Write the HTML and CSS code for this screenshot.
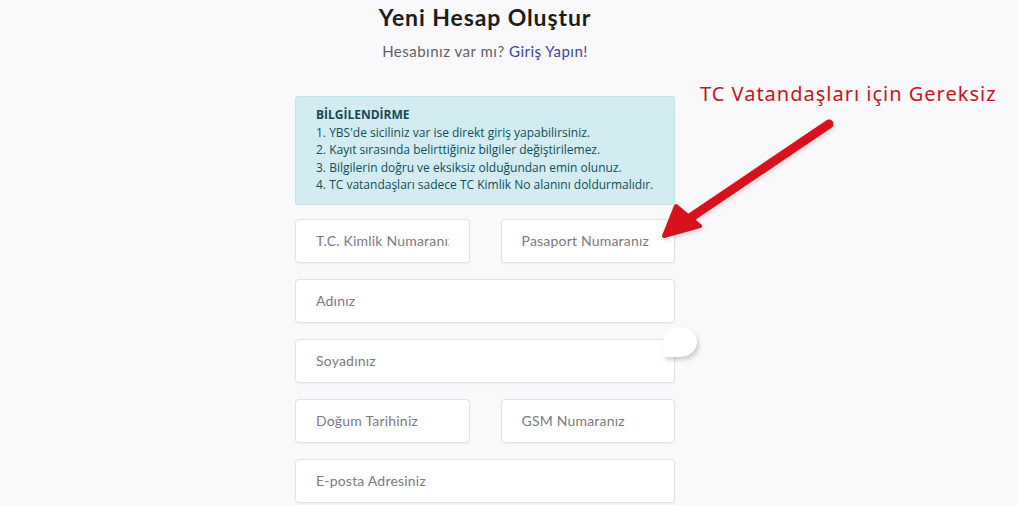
FILE: index.html
```html
<!DOCTYPE html>
<html>

<head>
    <title>Yeni Hesap Oluştur</title>
    <meta charset="UTF-8" />
    <link rel="stylesheet" href="styles.css">
</head>

<body>
    <div class="page">
        <div class="register">
            <h1>Yeni Hesap Oluştur</h1>
            <p class="login-hint">Hesabınız var mı? <a href="#">Giriş Yapın!</a></p>

            <div class="info">
                <strong>BİLGİLENDİRME</strong>
                <div>1. YBS'de siciliniz var ise direkt giriş yapabilirsiniz.</div>
                <div>2. Kayıt sırasında belirttiğiniz bilgiler değiştirilemez.</div>
                <div>3. Bilgilerin doğru ve eksiksiz olduğundan emin olunuz.</div>
                <div>4. TC vatandaşları sadece TC Kimlik No alanını doldurmalıdır.</div>
            </div>

            <form class="fields">
                <div class="row two">
                    <input type="text" placeholder="T.C. Kimlik Numaranız" />
                    <input type="text" placeholder="Pasaport Numaranız" />
                </div>
                <div class="row">
                    <input type="text" placeholder="Adınız" />
                </div>
                <div class="row">
                    <input type="text" placeholder="Soyadınız" />
                    <span class="bubble"></span>
                </div>
                <div class="row two">
                    <input type="text" placeholder="Doğum Tarihiniz" />
                    <input type="text" placeholder="GSM Numaranız" />
                </div>
                <div class="row">
                    <input type="email" placeholder="E-posta Adresiniz" />
                </div>
            </form>
        </div>

        <div class="note">TC Vatandaşları için Gereksiz</div>
        <svg class="arrow" width="1017" height="505" viewBox="0 0 1017 505">
            <line x1="829" y1="124" x2="690" y2="218" stroke="#d8121c" stroke-width="9" stroke-linecap="round" />
            <polygon points="664,236 676,206 700,226" fill="#d8121c" stroke="#d8121c" stroke-width="4" stroke-linejoin="round" />
        </svg>
    </div>
</body>

</html>
```

FILE: styles.css
```css
body {
    margin: 0;
    padding: 0;
    background-color: #f9f9fb;
    font-family: Lato, "Open Sans", sans-serif;
}

.page {
    position: relative;
    width: 1017px;
    height: 505px;
    overflow: hidden;
}

.register {
    width: 380px;
    margin-left: 295px;
    padding-top: 4px;
}

h1 {
    margin: 0;
    text-align: center;
    font-size: 23px;
    font-weight: 700;
    letter-spacing: 0.9px;
    color: #1c1c1c;
    line-height: 26px;
}

.login-hint {
    margin: 12px 0 0;
    text-align: center;
    font-size: 15px;
    letter-spacing: 0.5px;
    color: #5f5f66;
    line-height: 18px;
}

.login-hint a {
    color: #3a3fb0;
    text-decoration: none;
}

.info {
    margin-top: 36px;
    padding: 9px 20px 10px;
    background-color: #d2ecf1;
    border: 1px solid #bfe3ea;
    border-radius: 3px;
    color: #0e4e5c;
    font-family: "Open Sans", sans-serif;
    font-size: 12px;
    line-height: 17.5px;
}

.info strong {
    display: block;
    font-weight: 700;
    color: #124a58;
}

.fields {
    margin: 14px 0 0;
    display: flex;
    flex-direction: column;
    gap: 16px;
}

.row {
    position: relative;
    display: flex;
}

.row.two {
    gap: 31px;
}

.row input {
    flex: 1;
    min-width: 0;
    height: 44px;
    box-sizing: border-box;
    padding: 0 20px;
    border: 1px solid #e2e2e6;
    border-radius: 4px;
    background-color: #fff;
    box-shadow: 0 1px 2px rgba(0, 0, 0, 0.05);
    font-family: Lato, sans-serif;
    font-size: 14px;
    letter-spacing: 0.2px;
    outline: none;
}

.row input::placeholder {
    color: #7a7a7f;
}

.bubble {
    position: absolute;
    left: 368px;
    top: -12px;
    width: 34px;
    height: 30px;
    background-color: #fff;
    border-radius: 50% 50% 50% 0;
    box-shadow: 2px 3px 4px rgba(0, 0, 0, 0.18);
}

.note {
    position: absolute;
    left: 700px;
    top: 80px;
    font-family: "Noto Sans", sans-serif;
    font-size: 20px;
    letter-spacing: 1px;
    color: #c8141e;
    line-height: 28px;
}

.arrow {
    position: absolute;
    left: 0;
    top: 0;
    pointer-events: none;
    filter: drop-shadow(1px 2px 2px rgba(0, 0, 0, 0.15));
}
```
